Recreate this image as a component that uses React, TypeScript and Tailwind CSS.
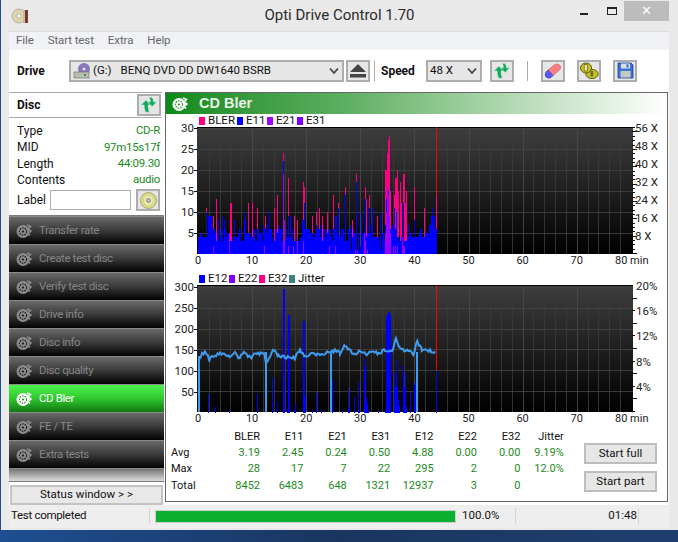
import React from "react";

const UI = { fontFamily: 'Roboto,"Open Sans",sans-serif' };
const CH = 'Roboto,"Liberation Sans",Arial,sans-serif';

function rng(seed: number) {
  let s = seed;
  return () => {
    s = (s * 1664525 + 1013904223) % 4294967296;
    return s / 4294967296;
  };
}
const zx = (z: number) => Math.round(170 + z / 3);

const bler: [number, number][] = [[109,11],[128,9],[137,13],[180,12],[183,12],[235,12],[245,12],[262,11],[284,9],[313,11],[320,14],[340,24],[355,18],[373,9],[380,8],[400,17],[403,16],[425,9],[438,10],[448,11],[456,9],[470,10],[488,14],[503,12],[526,16],[545,8],[559,19],[585,16],[588,13],[596,14],[605,11],[622,9],[645,20],[648,20],[651,24],[654,27],[657,28],[660,15],[672,14],[675,18],[678,18],[681,20],[684,15],[690,17],[693,12],[700,19],[703,19],[706,12],[709,15],[733,16],[763,11],[790,11],[799,14]];
const e11x: [number, number][] = [[109,10],[340,22],[355,9],[403,12],[503,11],[526,14],[559,17],[585,13],[596,11],[605,11],[648,13],[651,16],[654,15],[672,11],[678,10],[700,12],[790,11]];
const e21: [number, number][] = [[130,2],[178,5],[283,2],[340,19],[342,8],[355,2],[370,2],[380,4],[400,3],[478,2],[495,2],[556,1],[560,1],[582,5],[585,3],[590,1],[645,5],[648,10],[651,16],[654,14],[657,9],[660,5],[670,2],[675,2],[680,2],[697,4],[700,2],[703,2]];

function Grid({ top, bottom, hs }: { top: number; bottom: number; hs: number[] }) {
  const v: number[] = [];
  for (let m = 2; m < 80; m += 2) v.push(198 + m * 5.41);
  const id = "g" + top;
  return (
    <>
      <defs>
        <linearGradient id={id} x1="0" y1="0" x2="0" y2="1">
          <stop offset="0" stopColor="#3e3e3e" />
          <stop offset="1" stopColor="#000000" />
        </linearGradient>
      </defs>
      <rect x={197} y={top} width={436} height={bottom - top} fill={`url(#${id})`} />
      {v.map((x, i) => (
        <line key={i} x1={Math.round(x) + 0.5} x2={Math.round(x) + 0.5} y1={top} y2={bottom} stroke={(i + 1) % 5 === 0 ? "#4a4a4a" : "#3a3a3a"} strokeOpacity={0.85} />
      ))}
      {hs.map((y) => (
        <line key={y} x1={197} x2={633} y1={y + 0.5} y2={y + 0.5} stroke="#454545" strokeOpacity={0.8} />
      ))}
      <line x1={197} x2={633} y1={top + 0.5} y2={top + 0.5} stroke="#000" />
    </>
  );
}

function XAxis({ y }: { y: number }) {
  return (
    <g fontFamily={CH} fontSize={11} fill="#222">
      {[0, 10, 20, 30, 40, 50, 60, 70].map((m) => (
        <text key={m} x={198 + m * 5.41} y={y} textAnchor="middle">{m}</text>
      ))}
      <text x={615} y={y}>80 min</text>
    </g>
  );
}

function Chart1() {
  const base = 254;
  const u = 4.21;
  const r = rng(77);
  const bars: React.ReactNode[] = [];
  const map = (arr: [number, number][]) => {
    const m: Record<number, number> = {};
    arr.forEach(([z, v]) => (m[zx(z)] = v));
    return m;
  };
  const mb = map(bler), me = map(e11x), mv = map(e21);
  let prev = 4;
  for (let x = 198; x <= 436; x++) {
    let e = r() < 0.45 ? prev : 3 + Math.floor(r() * 4) + (r() < 0.35 ? Math.floor(r() * 5) : 0);
    prev = e;
    if (x > 198 + 28 * 5.41 && x < 198 + 34 * 5.41 && r() < 0.3) e = 1 + Math.floor(r() * 2);
    if (x < 210) e = Math.max(4, e);
    if (me[x]) e = me[x];
    const b = Math.max(mb[x] || 0, e);
    if (b > e) bars.push(<rect key={"b" + x} x={x} y={base - b * u} width={1} height={b * u} fill="#ff0080" />);
    bars.push(<rect key={"e" + x} x={x} y={base - e * u} width={1} height={e * u} fill="#0000ff" />);
    if (mv[x]) bars.push(<rect key={"v" + x} x={x} y={base - mv[x] * u} width={1} height={mv[x] * u} fill="#a000ff" />);
  }
  const ticks: React.ReactNode[] = [];
  for (let i = 0; i <= 29; i++) {
    const y = 253 - i * 4.34;
    ticks.push(<line key={i} x1={632} x2={i % 4 === 0 ? 637 : 635} y1={Math.round(y) + 0.5} y2={Math.round(y) + 0.5} stroke="#111" />);
  }
  return (
    <svg viewBox="166 121 501 147" width={501} height={147} className="-mt-[6px] block" shapeRendering="crispEdges">
      <Grid top={127} bottom={254} hs={[128, 149, 170, 191, 212, 233]} />
      {bars}
      <rect x={436} y={127} width={1} height={68} fill="#ff0000" />
      <g fontFamily={CH} fontSize={11.5} fill="#222" textAnchor="end" shapeRendering="auto">
        {[30, 25, 20, 15, 10, 5].map((v) => (
          <text key={v} x={194} y={254 - v * u + 4}>{v}</text>
        ))}
      </g>
      {[30, 25, 20, 15, 10, 5].map((v) => (
        <line key={v} x1={194} x2={198} y1={Math.round(254 - v * u) + 0.5} y2={Math.round(254 - v * u) + 0.5} stroke="#111" />
      ))}
      {ticks}
      <g fontFamily={CH} fontSize={11.5} fill="#222" shapeRendering="auto">
        {["56 X", "48 X", "40 X", "32 X", "24 X", "16 X", "8 X"].map((t, i) => (
          <text key={t} x={635} y={132 + i * 18}>{t}</text>
        ))}
      </g>
      <g shapeRendering="auto"><XAxis y={264} /></g>
    </svg>
  );
}

const e12: [number, number][] = [[115,45],[136,12],[178,5],[262,43],[305,85],[320,26],[340,295],[355,232],[352,8],[376,20],[372,5],[400,217],[403,72],[406,40],[427,6],[437,48],[454,5],[487,78],[517,4],[533,58],[536,10],[553,38],[563,72],[566,6],[583,110],[586,130],[589,35],[592,20],[595,5],[625,3],[644,5],[648,230],[651,232],[654,240],[657,232],[660,90],[672,95],[675,60],[678,62],[679,125],[682,60],[685,30],[688,15],[699,50],[700,112],[703,60],[706,95],[709,15],[721,50],[733,65],[736,72],[799,100]];
const jit: [number, number][] = [[88,130],[105,147],[118,127],[130,133],[150,143],[175,133],[195,142],[205,130],[225,143],[240,130],[260,142],[283,138],[288,118],[300,135],[310,148],[325,135],[345,132],[375,130],[390,148],[405,135],[430,142],[450,136],[478,145],[500,148],[510,140],[525,160],[550,140],[575,145],[590,138],[610,148],[625,140],[645,150],[670,148],[678,180],[690,150],[715,148],[730,140],[742,168],[755,150],[780,148],[795,143],[799,150]];

function Chart2() {
  const base = 412.5;
  const u = 0.42;
  const r = rng(9);
  const m: Record<number, number> = {};
  e12.forEach(([z, v]) => (m[zx(z)] = v));
  const bars = Object.entries(m).map(([x, v]) => (
    <rect key={x} x={+x} y={base - v * u} width={v > 150 ? 2 : 1} height={v * u} fill="#0000ff" />
  ));
  let d = "";
  for (let i = 0; i < jit.length - 1; i++) {
    const [a, va] = jit[i];
    const [b, vb] = jit[i + 1];
    const xa = 170 + a / 3, xb = 170 + b / 3;
    for (let x = xa; x < xb; x += 1.4) {
      const t = (x - xa) / (xb - xa);
      const v = va + (vb - va) * t + (r() - 0.5) * 8;
      d += `${d ? "L" : "M"}${x.toFixed(1)} ${(base - v * u).toFixed(1)} `;
    }
  }
  const drop = [285, 480, 737].map((z) => 170 + z / 3);
  return (
    <svg viewBox="166 279 501 146" width={501} height={146} className="-mt-[6px] block" shapeRendering="crispEdges">
      <Grid top={285} bottom={412} hs={[287, 308, 329, 349, 370, 391]} />
      {bars}
      <rect x={436} y={285} width={1} height={85} fill="#ff0000" />
      <path d={d} fill="none" stroke="#3f9bee" strokeWidth={2} shapeRendering="auto" />
      {drop.map((x) => (
        <rect key={x} x={Math.round(x)} y={352} width={2} height={60} fill="#3f9bee" />
      ))}
      <rect x={198} y={356} width={2} height={56} fill="#3f9bee" />
      <g fontFamily={CH} fontSize={11.5} fill="#222" textAnchor="end" shapeRendering="auto">
        {[300, 250, 200, 150, 100, 50].map((v) => (
          <text key={v} x={194} y={base - v * u + 4}>{v}</text>
        ))}
      </g>
      {[300, 250, 200, 150, 100, 50].map((v) => (
        <line key={v} x1={194} x2={198} y1={Math.round(base - v * u) + 0.5} y2={Math.round(base - v * u) + 0.5} stroke="#111" />
      ))}
      {[0, 1, 2, 3, 4, 5, 6, 7, 8, 9].map((i) => (
        <line key={i} x1={632} x2={i % 2 === 1 ? 637 : 635} y1={Math.round(411 - i * 12.6) + 0.5} y2={Math.round(411 - i * 12.6) + 0.5} stroke="#111" />
      ))}
      <g fontFamily={CH} fontSize={11.5} fill="#222" shapeRendering="auto">
        {["20%", "16%", "12%", "8%", "4%"].map((t, i) => (
          <text key={t} x={636} y={290 + i * 25.2}>{t}</text>
        ))}
      </g>
      <g shapeRendering="auto"><XAxis y={422} /></g>
    </svg>
  );
}

function Legend({ items }: { items: [string, string, number][] }) {
  return (
    <div className="relative z-10 flex h-[13px] items-center pl-[33px] pt-[1px] text-[11.5px] leading-none text-[#111]" style={{ fontFamily: CH }}>
      {items.map(([t, c, w]) => (
        <div key={t} className="flex shrink-0 items-center whitespace-nowrap" style={{ width: w }}>
          <span className="mr-[3px] h-[8px] w-[6px] shrink-0" style={{ background: c }} />
          {t}
        </div>
      ))}
    </div>
  );
}

function Arrows({ s = 18 }: { s?: number }) {
  return (
    <svg width={s} height={s} viewBox="0 0 20 20">
      <path d="M1 10 L6.5 4.5 L12 10 H9 C9 13 9.5 15 10.5 18 H6 C5 15 4.5 13 4.5 10 Z" fill="#17a85f" stroke="#cdeedd" strokeWidth=".7" />
      <path d="M10 1.5 H13 C14.5 3 15 4.5 15 6.5 H18.5 L13.5 12 L8.5 6.5 H11.5 C11.5 4.5 11 3 10 1.5 Z" fill="#17a85f" stroke="#cdeedd" strokeWidth=".7" />
    </svg>
  );
}

function DiscIcon({ white }: { white?: boolean }) {
  const c = white ? "#ffffff" : "#8a8a8a";
  const k = white ? "#1f9a1f" : "#1c1c1c";
  return (
    <svg width="16" height="16" viewBox="0 0 16 16">
      <circle cx="7" cy="8.5" r="6.5" fill={c} />
      <circle cx="7" cy="8.5" r="3.6" fill="none" stroke={k} strokeWidth="1.1" strokeDasharray="1.6 1" />
      <circle cx="7" cy="8.5" r="1.1" fill={k} />
      <path d="M11 2 L14.5 3.5 L12 6 L15 8 L12 10.5 L14 12.5" fill="none" stroke={c} strokeWidth="1.6" />
    </svg>
  );
}

const navItems = ["Transfer rate", "Create test disc", "Verify test disc", "Drive info", "Disc info", "Disc quality", "CD Bler", "FE / TE", "Extra tests"];

function Nav() {
  return (
    <div className="flex flex-col gap-px border-y border-[#7c7c7c] bg-[#8a8a8a] pt-px">
      {navItems.map((t) => {
        const on = t === "CD Bler";
        return (
          <div
            key={t}
            className={
              on
                ? "flex h-[27px] items-center bg-gradient-to-b from-[#4cf24c] via-[#2fc82f] via-50% to-[#127a12] pl-[7px] text-[11.5px] tracking-[-0.4px] text-white"
                : "flex h-[27px] items-center bg-gradient-to-b from-[#6a6a6a] via-[#3a3a3a] via-50% to-[#050505] pl-[7px] text-[11.5px] tracking-[-0.4px] text-[#868686]"
            }
          >
            <DiscIcon white={on} />
            <span className="ml-[7px]">{t}</span>
          </div>
        );
      })}
      <div className="h-[12px] bg-gradient-to-b from-[#777] to-[#dcdcdc]" />
    </div>
  );
}

function IconBtn({ children, w = 24 }: { children: React.ReactNode; w?: number }) {
  return (
    <div className="flex h-[22px] items-center justify-center border-2 border-[#adadad] bg-[#e6e6e6]" style={{ width: w }}>
      {children}
    </div>
  );
}

const rows: [string, string][] = [["Type", "CD-R"], ["MID", "97m15s17f"], ["Length", "44:09.30"], ["Contents", "audio"]];

const stats = [
  ["", "BLER", "E11", "E21", "E31", "E12", "E22", "E32", "Jitter"],
  ["Avg", "3.19", "2.45", "0.24", "0.50", "4.88", "0.00", "0.00", "9.19%"],
  ["Max", "28", "17", "7", "22", "295", "2", "0", "12.0%"],
  ["Total", "8452", "6483", "648", "1321", "12937", "3", "0", ""],
];

export default function App() {
  return (
    <div className="h-[542px] w-[678px] overflow-hidden bg-gradient-to-r from-[#1d4f92] via-[#1a3560] to-[#203f70] pl-px" style={UI}>
      <div className="flex h-[530px] w-[677px] flex-col bg-[#e9e9e9]">
        {/* title bar */}
        <div className="relative flex h-[31px] shrink-0 items-center justify-center pb-[1px] text-[15px] text-[#2b2b2b]">
          <svg className="absolute left-[10px] top-[7px]" width="18" height="18" viewBox="0 0 18 18">
            <circle cx="8" cy="9" r="7" fill="#dcd3b0" stroke="#9a9378" strokeWidth=".6" />
            <circle cx="8" cy="9" r="2" fill="#fff" stroke="#888" strokeWidth=".5" />
            <rect x="12" y="3" width="5" height="13" fill="#7a3b2e" />
            <rect x="12" y="3" width="2" height="13" fill="#c9b9a0" />
          </svg>
          Opti Drive Control 1.70
          <span className="absolute left-[579px] top-[13px] h-[2px] w-[8px] bg-[#222]" />
          <span className="absolute left-[606px] top-[7px] h-[8px] w-[10px] border border-t-2 border-[#222]" />
          <span className="absolute left-[623px] top-[1px] flex h-[20px] w-[45px] items-center justify-center bg-[#bcbcbc] text-[13px] text-white">✕</span>
        </div>
        {/* menu */}
        <div className="ml-[8px] mr-[9px] flex h-[19px] shrink-0 items-center border-t border-[#dcdcdc] bg-[#f1f2f5] text-[11.5px] tracking-[-0.1px] text-[#666]">
          <span className="ml-[7px]">File</span>
          <span className="ml-[14px]">Start test</span>
          <span className="ml-[14px]">Extra</span>
          <span className="ml-[14px]">Help</span>
        </div>
        {/* content */}
        <div className="ml-[8px] mr-[9px] flex min-h-0 flex-1 flex-col bg-white">
          {/* toolbar */}
          <div className="flex h-[42px] shrink-0 items-center pb-[1px] text-[11.5px] text-[#111]">
            <span className="ml-[8px] w-[52px] text-[12px] font-bold">Drive</span>
            <div className="flex h-[22px] w-[275px] items-center border-2 border-[#adadad] bg-[#e6e6e6] pl-[2px]">
              <svg width="19" height="18" viewBox="0 0 19 18">
                <circle cx="11" cy="7" r="6" fill="#8a76b8" />
                <circle cx="11" cy="7" r="1.6" fill="#ddd" />
                <rect x="1" y="10" width="15" height="6" fill="#b9bdb4" stroke="#666" strokeWidth=".6" />
                <rect x="11" y="12" width="2" height="2" fill="#2a9c3a" />
              </svg>
              <span className="ml-[1px]">(G:)</span>
              <span className="ml-[9px] flex-1 whitespace-nowrap">BENQ DVD DD DW1640 BSRB</span>
              <svg width="10" height="8" viewBox="0 0 10 8" className="mr-[3px]"><path d="M1 1.5 L5 6 L9 1.5" fill="none" stroke="#444" strokeWidth="1.8" /></svg>
            </div>
            <div className="ml-[2px]">
              <IconBtn>
                <svg width="16" height="14" viewBox="0 0 16 14"><path d="M8 0 L16 8 H0 Z" fill="#444" /><rect y="10" width="16" height="3.5" fill="#444" /></svg>
              </IconBtn>
            </div>
            <span className="ml-[4px] h-[20px] w-px bg-[#aaa]" />
            <span className="ml-[6px] w-[45px] text-[12px] font-bold">Speed</span>
            <div className="flex h-[22px] w-[56px] items-center justify-between border-2 border-[#adadad] bg-[#e6e6e6] pl-[2px] pr-[3px]">
              48 X
              <svg width="10" height="8" viewBox="0 0 10 8"><path d="M1 1.5 L5 6 L9 1.5" fill="none" stroke="#444" strokeWidth="1.8" /></svg>
            </div>
            <div className="ml-[8px]"><IconBtn><Arrows /></IconBtn></div>
            <span className="ml-[13px] h-[20px] w-px bg-[#aaa]" />
            <div className="ml-[13px]">
              <IconBtn>
                <svg width="18" height="18" viewBox="0 0 18 18">
                  <path d="M4 8 L11 2.5 Q14 1 16 3.5 Q17.5 6 15.5 8 L9 13.5 Z" fill="#f98080" stroke="#dd5a5a" strokeWidth=".7" />
                  <path d="M4 8 L9 13.5 L7 15.5 Q4 17 2 15 Q0.5 12.5 2 10 Z" fill="#5c5cf0" stroke="#3a3ac0" strokeWidth=".7" />
                </svg>
              </IconBtn>
            </div>
            <div className="ml-[12px]">
              <IconBtn>
                <svg width="20" height="18" viewBox="0 0 20 18">
                  <ellipse cx="13" cy="12" rx="6.2" ry="4.6" fill="#c4c020" stroke="#55550f" strokeWidth=".9" />
                  <rect x="11.5" y="9" width="2.6" height="5.5" fill="#6a6a18" />
                  <ellipse cx="7" cy="6" rx="5.6" ry="5" fill="#c4c020" stroke="#55550f" strokeWidth=".9" />
                  <rect x="5.2" y="2.5" width="3" height="6.5" fill="#eeeeb0" stroke="#55550f" strokeWidth=".6" />
                </svg>
              </IconBtn>
            </div>
            <div className="ml-[12px]">
              <IconBtn>
                <svg width="17" height="17" viewBox="0 0 17 17">
                  <path d="M1 1 H14 L16 3 V16 H1 Z" fill="#3f70d8" stroke="#20408f" strokeWidth=".8" />
                  <rect x="4" y="1.5" width="9" height="5" fill="#d8dde8" />
                  <rect x="9.5" y="2.2" width="2" height="3.4" fill="#3f70d8" />
                  <rect x="3.5" y="9" width="10" height="6.5" fill="#c8c8c8" />
                </svg>
              </IconBtn>
            </div>
          </div>

          <div className="flex min-h-0 flex-1">
            {/* left column */}
            <div className="flex w-[155px] shrink-0 flex-col">
              <div className="w-[153px] text-[12px] text-[#111]">
                <div className="flex h-[26px] items-center justify-between border-y border-[#a8a8a8] pl-[8px] pr-px font-bold">
                  Disc
                  <IconBtn><Arrows /></IconBtn>
                </div>
                <div className="flex flex-col pl-[8px] pr-[2px] pt-[5px]">
                  {rows.map(([a, b]) => (
                    <div key={a} className="flex h-[16.25px] items-center justify-between leading-none">
                      <span>{a}</span>
                      <span className="text-[11.5px] tracking-[-0.3px] text-[#1c8a1c]">{b}</span>
                    </div>
                  ))}
                </div>
                <div className="mt-[1px] flex h-[22px] items-center pl-[8px] pr-px">
                  <span className="w-[33px]">Label</span>
                  <span className="h-[20px] w-[81px] border border-[#adadad] bg-white" />
                  <div className="ml-[5px]">
                    <IconBtn>
                      <svg width="17" height="17" viewBox="0 0 17 17">
                        <circle cx="8.5" cy="8.5" r="8" fill="#dbd98a" stroke="#8f8f60" strokeWidth=".7" />
                        <circle cx="8.5" cy="8.5" r="4.5" fill="#ecebb8" />
                        <circle cx="8.5" cy="8.5" r="2" fill="#bbb" stroke="#666" strokeWidth=".6" />
                      </svg>
                    </IconBtn>
                  </div>
                </div>
              </div>
              <div className="mt-[4px] w-[155px]"><Nav /></div>
              <div className="ml-px mt-[3px] flex h-[20px] w-[153px] items-center justify-center border-2 border-[#c4c4c4] bg-[#e8e8e8] text-[11.5px] text-[#111]">
                Status window &gt; &gt;
              </div>
            </div>

            {/* main panel */}
            <div className="ml-px flex h-[410px] w-[503px] flex-col border border-[#666] bg-white">
              <div className="flex h-[21px] shrink-0 items-center bg-gradient-to-r from-[#078a17] via-[#5bae60] via-35% to-white pl-[6px] text-[14.5px] font-bold text-[#e8f7e8]" style={{ fontFamily: '"Liberation Sans",Arial,sans-serif' }}>
                <DiscIcon white />
                <span className="ml-[11px]">CD Bler</span>
              </div>
              <Legend items={[["BLER", "#ff0080", 38], ["E11", "#0000ff", 30], ["E21", "#a000ff", 30], ["E31", "#8000ff", 30]]} />
              <Chart1 />
              <div className="h-[4px]" />
              <Legend items={[["E12", "#0000ff", 30], ["E22", "#8000ff", 30], ["E32", "#ff0080", 30], ["Jitter", "#408080", 42]]} />
              <Chart2 />
              <div className="flex flex-1">
                <div className="mt-[3px] w-[405px] pl-[5px] text-[11px]">
                  {stats.map((r, i) => (
                    <div key={i} className="flex h-[16.4px] items-center leading-none">
                      <span className="w-[23px] text-[#111]">{r[0]}</span>
                      {r.slice(1).map((c, j) => (
                        <span key={j} className={"text-right " + (i === 0 ? "text-[#111]" : "text-[#1c8a1c]") + (j === 0 ? " w-[66px]" : " w-[43.4px]")}>{c}</span>
                      ))}
                    </div>
                  ))}
                </div>
                <div className="ml-[13px] flex flex-col gap-[7px] pt-[18px]">
                  {["Start full", "Start part"].map((t) => (
                    <div key={t} className="flex h-[21px] w-[73px] items-center justify-center border-2 border-[#bdbdbd] bg-[#e6e6e6] text-[11.5px] text-[#111]">{t}</div>
                  ))}
                </div>
              </div>
            </div>
          </div>
        </div>
        {/* status bar */}
        <div className="mb-[2px] ml-[8px] mr-[9px] flex h-[23px] shrink-0 items-center bg-[#eeeeee] pb-[1px] text-[11.5px] text-[#111]">
          <span className="ml-[2px] w-[138px] tracking-[-0.3px]">Test completed</span>
          <span className="h-[16px] w-px bg-[#d4d4d4]" />
          <div className="ml-[5px] h-[13px] w-[301px] border border-[#cfcfcf] bg-[#0bb02e]" />
          <span className="ml-[6px] w-[53px]">100.0%</span>
          <span className="h-[16px] w-px bg-[#d4d4d4]" />
          <span className="w-[121px] text-right">01:48</span>
          <span className="ml-px h-[16px] w-px bg-[#d4d4d4]" />
        </div>
      </div>
    </div>
  );
}
